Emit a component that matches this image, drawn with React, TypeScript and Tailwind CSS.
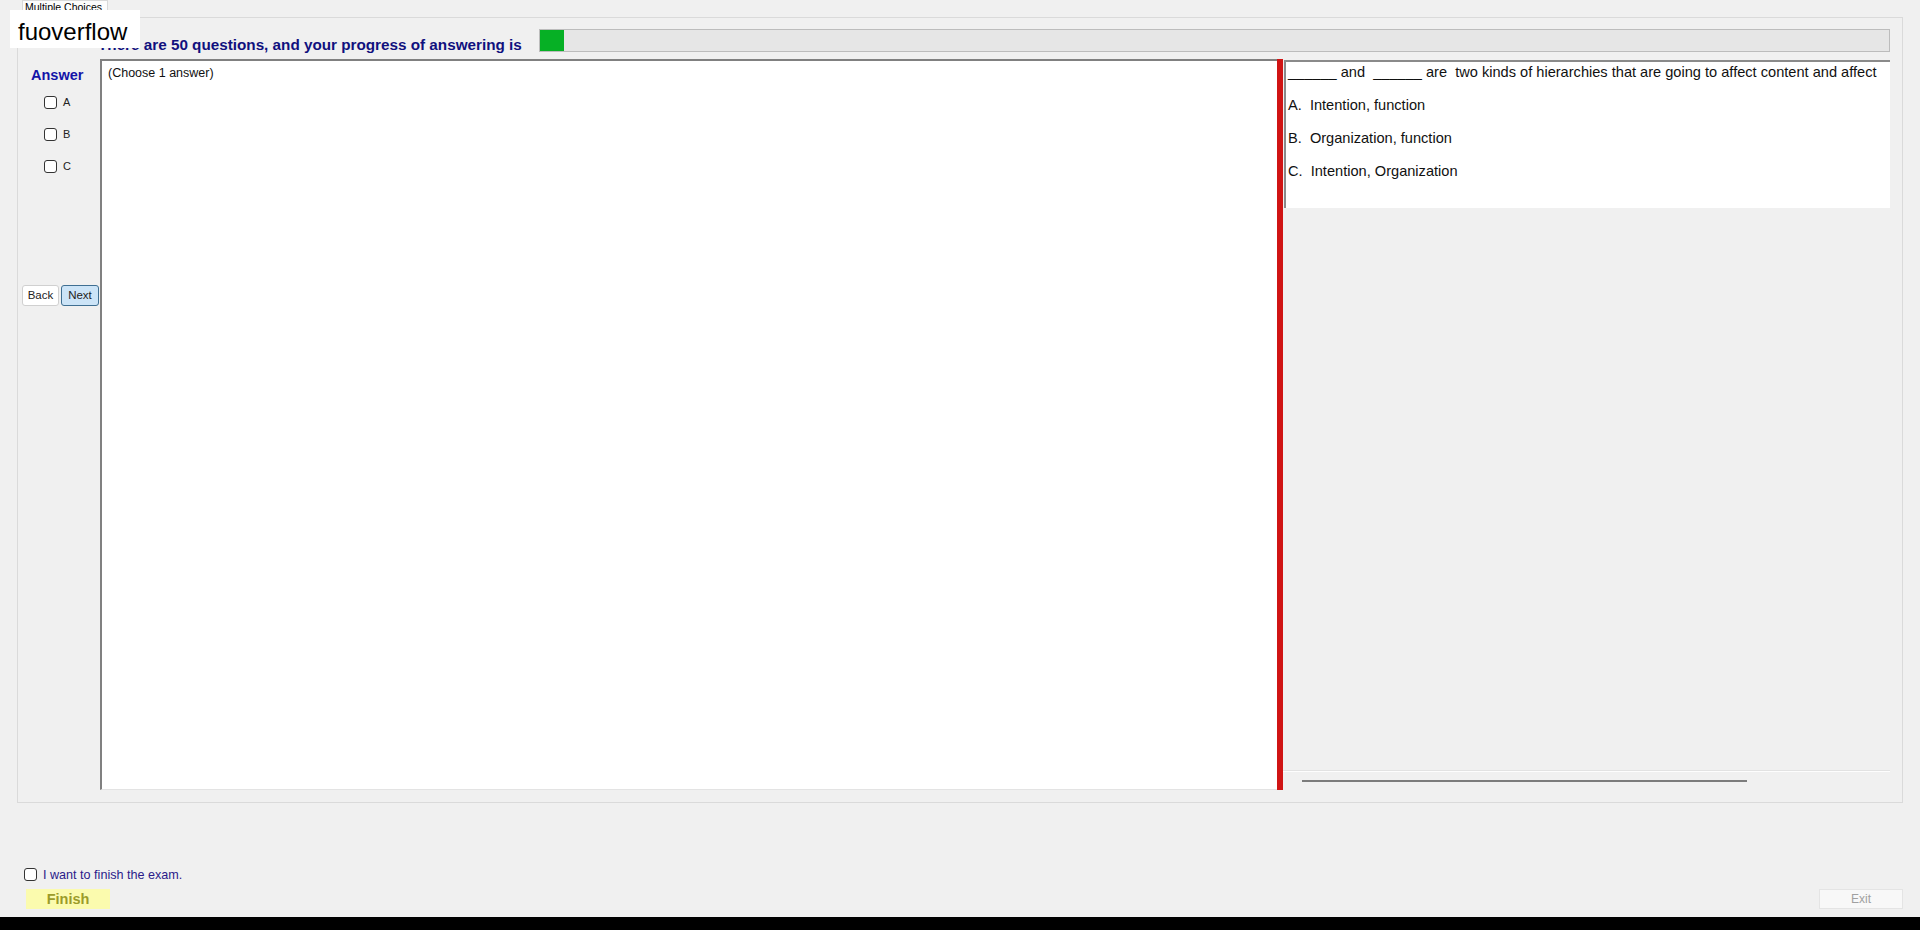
import React from 'react'

const font = "font-['Liberation_Sans',Arial,sans-serif]"

function Box({ className = '' }: { className?: string }) {
  return <span className={`block w-[13px] h-[13px] rounded-[3px] border border-[#333] bg-white shrink-0 ${className}`} />
}

const options = ['A', 'B', 'C']
const lines = [
  'A.  Intention, function',
  'B.  Organization, function',
  'C.  Intention, Organization',
]

export default function App() {
  return (
    <div className={`relative w-[1920px] h-[930px] bg-[#f0f0f0] flex flex-col overflow-hidden text-black ${font}`}>
      {/* Tab strip */}
      <div className="h-[17px] pl-[22px] flex items-end">
        <div className="h-[17px] w-[86px] bg-[#fcfcfc] border border-b-0 border-[#d9d9d9] text-[10.5px] leading-[12px] pl-[2px] whitespace-nowrap overflow-hidden">
          Multiple Choices
        </div>
      </div>

      {/* Tab page */}
      <div className="ml-[17px] w-[1886px] h-[786px] border border-[#dadada] bg-[#f0f0f0] flex flex-col">
        {/* Heading + progress */}
        <div className="mt-[11px] h-[23px] flex items-center">
          <p className="ml-[80px] w-[441px] text-[15.25px] font-bold text-[#10107e] whitespace-nowrap leading-[18px] pt-[8px]">
            There are 50 questions, and your progress of answering is
          </p>
          <div className="w-[1351px] h-[23px] bg-[#e6e6e6] border border-[#bcbcbc] flex">
            <div className="w-[24px] h-full bg-[#06b025]" />
          </div>
        </div>

        {/* Content */}
        <div className="mt-[7px] h-[731px] flex">
          {/* Answer column */}
          <div className="w-[82px] flex flex-col">
            <p className="mt-[8px] ml-[13px] text-[14.5px] font-bold text-[#1414a8] leading-[16px]">Answer</p>
            <div className="mt-[13px] ml-[26px] flex flex-col gap-[19px]">
              {options.map(o => (
                <label key={o} className="flex items-center gap-[6px] h-[13px] text-[11px] text-[#222]">
                  <Box />
                  {o}
                </label>
              ))}
            </div>
            <div className="mt-[112px] ml-[4px] flex gap-[2px]">
              <button className="w-[37px] h-[21px] bg-white border border-[#d0d0d0] rounded-[3px] text-[11.5px] text-[#222]">Back</button>
              <button className="w-[38px] h-[21px] bg-[#cce4f7] border border-[#3f6f92] rounded-[3px] text-[11.5px] text-[#222]">Next</button>
            </div>
          </div>

          {/* Answer text panel */}
          <div className="w-[1177px] h-full bg-white border-l-[2px] border-t-[2px] border-[#808080] border-b border-b-[#e3e3e3]">
            <p className="mt-[5px] ml-[6px] text-[12.5px] leading-[14px] text-[#111]">(Choose 1 answer)</p>
          </div>

          {/* Splitter */}
          <div className="w-[6px] h-full bg-[#d01414]" />

          {/* Question panel */}
          <div className="w-[607px] h-full flex flex-col">
            <div className="ml-[1px] mt-[1px] h-[148px] bg-white border-l-[2px] border-t-[2px] border-[#8a8a8a] pl-[2px] pt-[1px] flex flex-col gap-[15px] overflow-hidden text-[14.6px] leading-[18px] text-[#111] whitespace-pre">
              <p>______ and  ______ are  two kinds of hierarchies that are going to affect content and affect</p>
              {lines.map(l => <p key={l}>{l}</p>)}
            </div>
            <div className="flex-1" />
            <div className="h-[19px] border-t border-[#fdfdfd] shadow-[0_-1px_0_#e2e2e2] flex items-center">
              <div className="ml-[19px] w-[445px] h-[2px] bg-[#7c7c7c]" />
            </div>
          </div>
        </div>
      </div>

      {/* Bottom controls */}
      <div className="mt-[65px] ml-[24px] flex items-center gap-[6px] h-[13px]">
        <Box />
        <span className="text-[12.6px] text-[#2b1b8a] leading-[14px]">I want to finish the exam.</span>
      </div>
      <div className="mt-[8px] pl-[26px] pr-[17px] flex justify-between">
        <button className="w-[84px] h-[20px] bg-[#fbfbae] text-[14.5px] font-bold text-[#9b9b2a] leading-[20px]">Finish</button>
        <button className="w-[84px] h-[20px] bg-[#f8f8f8] border border-[#e4e4e4] text-[12px] text-[#a0a0a0] leading-[18px]">Exit</button>
      </div>
      <div className="flex-1" />
      <div className="h-[13px] bg-black" />

      {/* Watermark overlay */}
      <div className="absolute left-[10px] top-[10px] w-[130px] h-[38px] bg-white pl-[8px] pt-[8px] text-[24px] leading-[28px] text-black">
        fuoverflow
      </div>
    </div>
  )
}
